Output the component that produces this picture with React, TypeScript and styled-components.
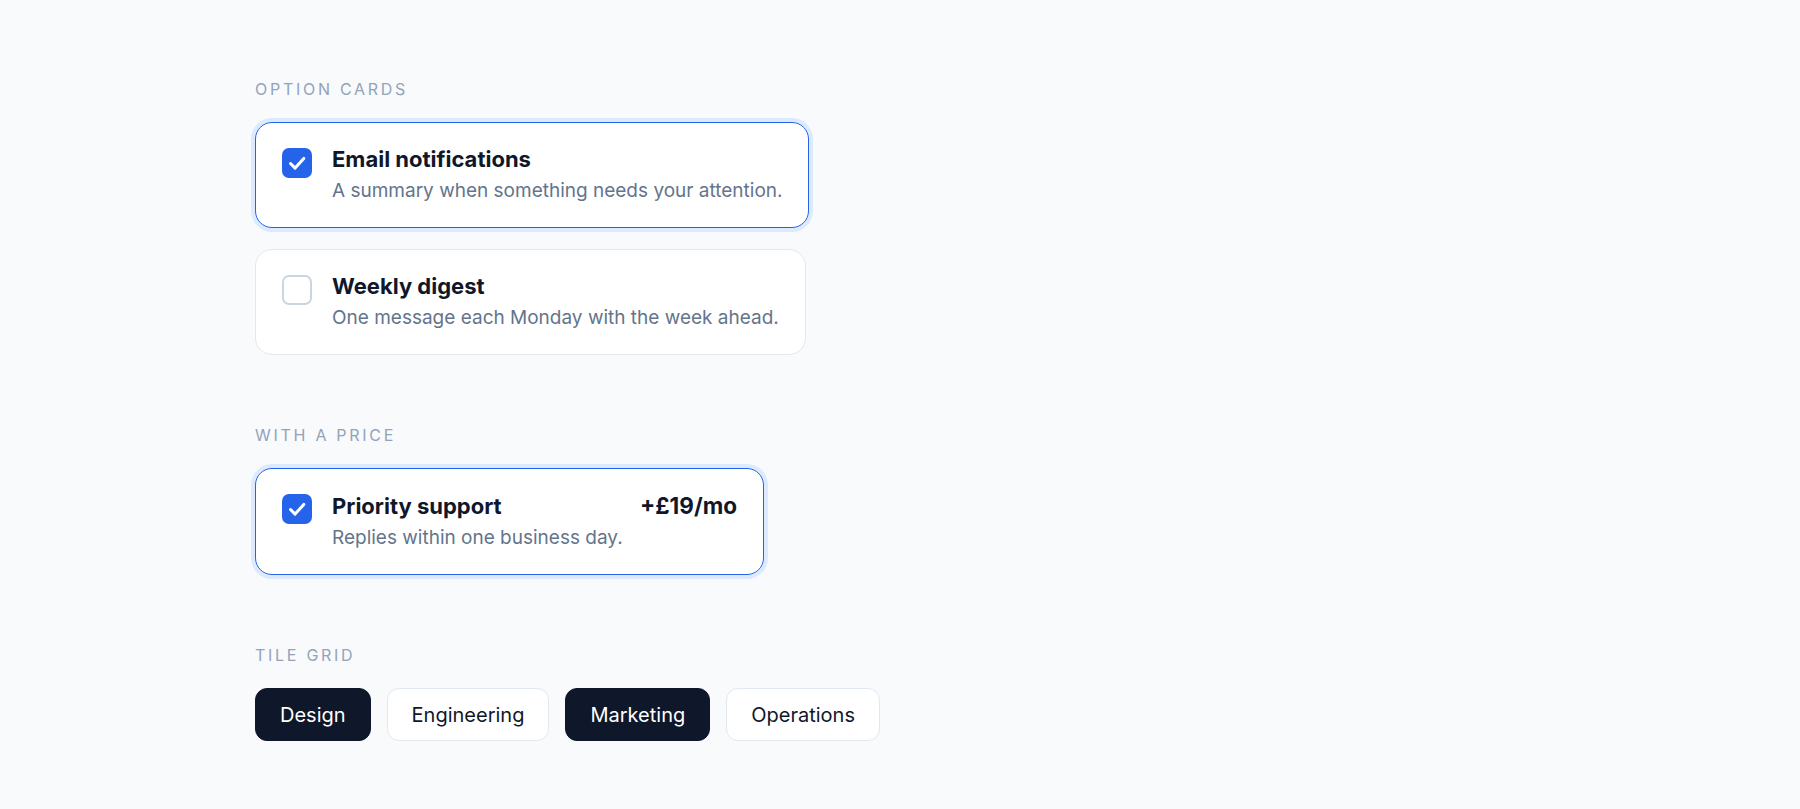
import styled, { createGlobalStyle } from 'styled-components'
import { useState } from 'react'

const GlobalStyle = createGlobalStyle`
  html, body {
    margin: 0;
    padding: 0;
    background: #f8fafc;
    font-family: Inter, "Noto Sans", "Liberation Sans", sans-serif;
    color: #0f172a;
  }
`

const Page = styled.main`
  display: flex;
  flex-direction: column;
  gap: 71px;
  padding: 80px 0 60px 255px;
  min-height: 100vh;
  box-sizing: border-box;
`

const Section = styled.section`
  display: flex;
  flex-direction: column;
  align-items: flex-start;
  gap: 23px;
`

const Label = styled.div`
  font-size: 16px;
  line-height: 19px;
  letter-spacing: 0.17em;
  text-transform: uppercase;
  color: #94a3b8;
`

const Stack = styled.div`
  display: flex;
  flex-direction: column;
  align-items: flex-start;
  gap: 21px;
`

const Card = styled.label<{ $checked: boolean; $minWidth?: number }>`
  display: flex;
  align-items: flex-start;
  gap: 20px;
  box-sizing: border-box;
  min-width: ${p => (p.$minWidth ? `${p.$minWidth}px` : 'auto')};
  padding: 23px 26px 23px 26px;
  background: #ffffff;
  border: 1.5px solid ${p => (p.$checked ? '#2563eb' : '#e2e8f0')};
  border-radius: 17px;
  box-shadow: ${p => (p.$checked ? '0 0 0 4px #dbeafe' : 'none')};
  cursor: pointer;
`

const Box = styled.span<{ $checked: boolean }>`
  flex: none;
  display: flex;
  align-items: center;
  justify-content: center;
  width: 30px;
  height: 30px;
  margin-top: 2px;
  box-sizing: border-box;
  border-radius: 7px;
  background: ${p => (p.$checked ? '#2563eb' : '#ffffff')};
  border: ${p => (p.$checked ? 'none' : '2px solid #cbd5e1')};
`

const Body = styled.div`
  display: flex;
  flex-direction: column;
  gap: 6px;
  flex: 1;
`

const TitleRow = styled.div`
  display: flex;
  justify-content: space-between;
  align-items: baseline;
  gap: 24px;
`

const Title = styled.span`
  font-size: 22px;
  line-height: 26px;
  font-weight: 700;
  color: #0f172a;
`

const Price = styled.span`
  font-size: 22.5px;
  line-height: 27px;
  font-weight: 700;
  color: #0f172a;
`

const Desc = styled.span`
  font-size: 19px;
  line-height: 26px;
  color: #64748b;
`

const Tiles = styled.div`
  display: flex;
  gap: 16px;
`

const Tile = styled.button<{ $active: boolean }>`
  height: 53px;
  padding: 0 24px;
  border-radius: 12px;
  font-family: inherit;
  font-size: 20px;
  font-weight: 400;
  cursor: pointer;
  background: ${p => (p.$active ? '#0f172a' : '#ffffff')};
  color: ${p => (p.$active ? '#ffffff' : '#0f172a')};
  border: 1.5px solid ${p => (p.$active ? '#0f172a' : '#e2e8f0')};
`

function Check({ checked }: { checked: boolean }) {
  return (
    <Box $checked={checked}>
      {checked && (
        <svg width="30" height="30" viewBox="0 0 30 30" fill="none">
          <path d="M8.5 15.5l4.6 4.6L21.8 10.4" stroke="#fff" strokeWidth="3" strokeLinecap="round" strokeLinejoin="round" />
        </svg>
      )}
    </Box>
  )
}

type Option = { id: string; title: string; desc: string }

const options: Option[] = [
  { id: 'email', title: 'Email notifications', desc: 'A summary when something needs your attention.' },
  { id: 'digest', title: 'Weekly digest', desc: 'One message each Monday with the week ahead.' },
]

const tiles = ['Design', 'Engineering', 'Marketing', 'Operations']

export default function App() {
  const [picked, setPicked] = useState<Record<string, boolean>>({ email: true, digest: false, priority: true })
  const [activeTiles, setActiveTiles] = useState<string[]>(['Design', 'Marketing'])

  function toggle(id: string) {
    setPicked({ ...picked, [id]: !picked[id] })
  }

  function toggleTile(name: string) {
    setActiveTiles(activeTiles.includes(name) ? activeTiles.filter(t => t !== name) : [...activeTiles, name])
  }

  return (
    <>
      <GlobalStyle />
      <Page>
        <Section>
          <Label>Option cards</Label>
          <Stack>
            {options.map(o => (
              <Card key={o.id} $checked={picked[o.id]} onClick={() => toggle(o.id)}>
                <Check checked={picked[o.id]} />
                <Body>
                  <Title>{o.title}</Title>
                  <Desc>{o.desc}</Desc>
                </Body>
              </Card>
            ))}
          </Stack>
        </Section>

        <Section>
          <Label>With a price</Label>
          <Card $checked={picked.priority} $minWidth={509} onClick={() => toggle('priority')}>
            <Check checked={picked.priority} />
            <Body>
              <TitleRow>
                <Title>Priority support</Title>
                <Price>+£19/mo</Price>
              </TitleRow>
              <Desc>Replies within one business day.</Desc>
            </Body>
          </Card>
        </Section>

        <Section>
          <Label>Tile grid</Label>
          <Tiles>
            {tiles.map(t => (
              <Tile key={t} $active={activeTiles.includes(t)} onClick={() => toggleTile(t)}>
                {t}
              </Tile>
            ))}
          </Tiles>
        </Section>
      </Page>
    </>
  )
}
